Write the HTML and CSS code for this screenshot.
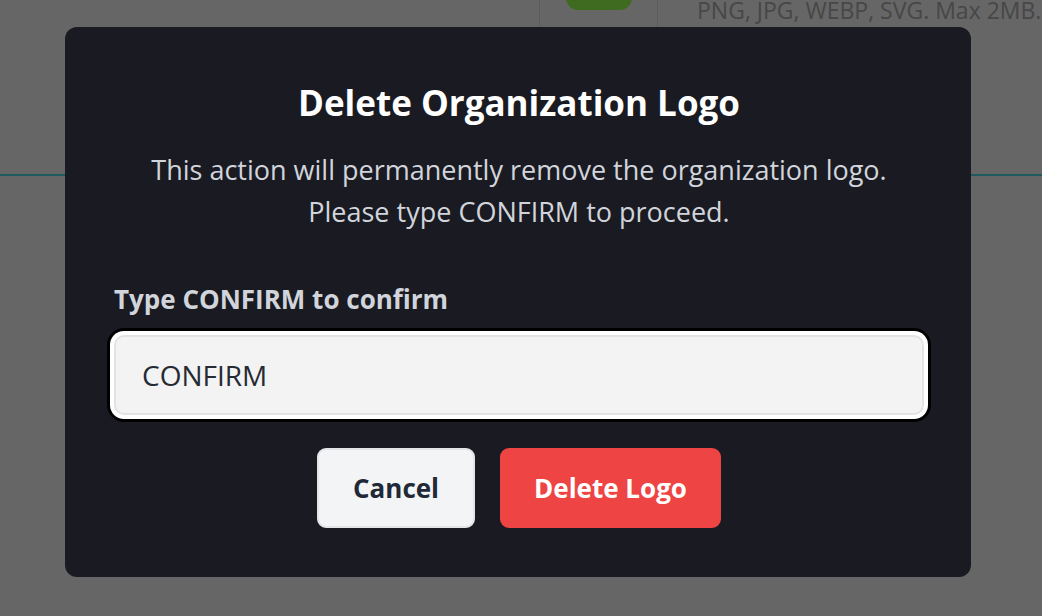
FILE: index.html
```html
<!DOCTYPE html>
<html lang="en">
<head>
<meta charset="utf-8">
<title>Delete Organization Logo</title>
<link rel="stylesheet" href="styles.css">
</head>
<body>
<div class="page">
  <div class="upload-row">
    <div class="logo-box"><div class="logo-shape"></div></div>
    <p class="upload-hint">PNG, JPG, WEBP, SVG. Max 2MB.</p>
  </div>
  <div class="divider"></div>
</div>

<div class="overlay">
  <div class="dialog" role="dialog" aria-labelledby="dlg-title">
    <h2 class="dialog-title" id="dlg-title">Delete Organization Logo</h2>
    <p class="dialog-desc">This action will permanently remove the organization logo.<br>Please type CONFIRM to proceed.</p>
    <label class="field-label" for="confirm-input">Type CONFIRM to confirm</label>
    <input class="field-input" id="confirm-input" type="text" value="CONFIRM">
    <div class="actions">
      <button class="btn btn-cancel" type="button">Cancel</button>
      <button class="btn btn-danger" type="button">Delete Logo</button>
    </div>
  </div>
</div>
</body>
</html>
```
FILE: styles.css
```css
html, body {
  margin: 0;
  padding: 0;
}
body {
  background: #666666;
  font-family: "Open Sans", "Noto Sans", sans-serif;
  width: 1042px;
  height: 616px;
  overflow: hidden;
}
.page {
  display: flex;
  flex-direction: column;
}
.upload-row {
  display: flex;
  align-items: flex-start;
  margin-top: -80px;
  padding-left: 539px;
  height: 107px;
}
.logo-box {
  box-sizing: border-box;
  width: 119px;
  height: 107px;
  border-left: 1px solid #5c5c5c;
  border-right: 1px solid #5c5c5c;
  display: flex;
  justify-content: center;
  align-items: flex-end;
  padding-bottom: 17px;
}
.logo-shape {
  width: 66px;
  height: 60px;
  background: #3e6b1f;
  border-radius: 12px;
}
.upload-hint {
  margin: 76px 0 0 39px;
  font-size: 23px;
  line-height: 28px;
  color: #474747;
  white-space: nowrap;
}
.divider {
  margin-top: 147px;
  height: 2px;
  background: #1f5b5e;
}

.overlay {
  position: fixed;
  inset: 0;
  display: flex;
  justify-content: center;
  align-items: flex-start;
  padding: 27px 6px 0 0;
}
.dialog {
  box-sizing: border-box;
  width: 906px;
  height: 550px;
  background: #1a1b22;
  border-radius: 12px;
  padding: 52px 47px 49px 49px;
  display: flex;
  flex-direction: column;
  text-align: center;
}
.dialog-title {
  margin: 0;
  font-size: 35px;
  line-height: 48px;
  font-weight: 700;
  color: #ffffff;
}
.dialog-desc {
  margin: 22px 0 0;
  font-size: 27px;
  line-height: 42px;
  color: #d1d5db;
}
.field-label {
  margin-top: 46px;
  text-align: left;
  font-size: 26px;
  line-height: 40px;
  font-weight: 700;
  color: #d1d5db;
}
.field-input {
  margin-top: 16px;
  box-sizing: border-box;
  width: 100%;
  height: 81px;
  border: 2px solid #e3e3e3;
  border-radius: 10px;
  background: #f3f3f3;
  padding: 0 26px;
  font-family: inherit;
  font-size: 28px;
  color: #252a33;
  outline: none;
  box-shadow: 0 0 0 4px #ffffff, 0 0 0 7px #000000;
}
.actions {
  margin-top: 33px;
  display: flex;
  justify-content: center;
  gap: 25px;
}
.btn {
  box-sizing: border-box;
  height: 80px;
  padding: 0 32px;
  border-radius: 9px;
  font-family: inherit;
  font-size: 26px;
  font-weight: 700;
  cursor: pointer;
}
.btn-cancel {
  padding: 0 34px;
  background: #f3f4f6;
  border: 2px solid #e3e5e8;
  color: #1f2937;
}
.btn-danger {
  background: #ef4444;
  border: 2px solid #ef4444;
  color: #ffffff;
}
```
